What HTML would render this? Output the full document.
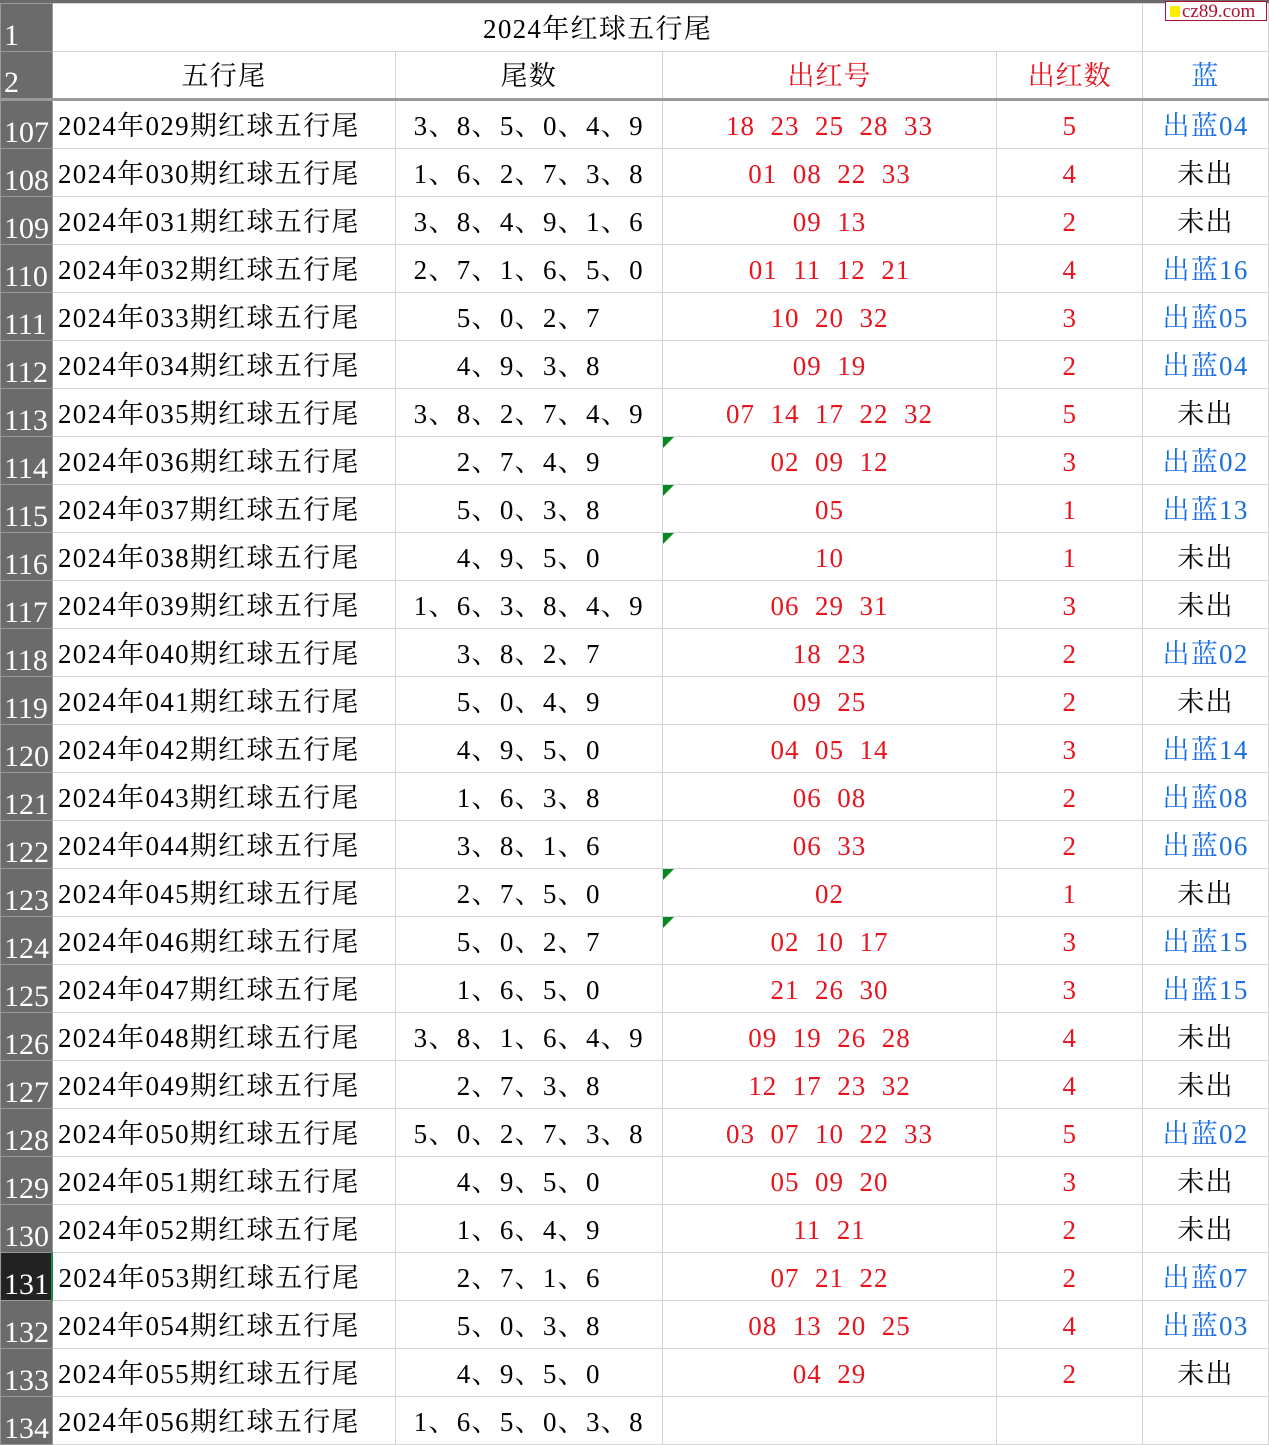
<!DOCTYPE html>
<html><head><meta charset="utf-8"><style>
body{margin:0;background:#fff;width:1269px;height:1441px;overflow:hidden;position:relative}
table{border-collapse:collapse;table-layout:fixed;position:absolute;left:0;top:3px;font-family:"Liberation Serif","Noto Serif CJK SC",serif;font-size:27px;letter-spacing:1.3px}
td{border:1px solid #d4d4d4;height:44px;line-height:44px;padding:3px 0 0 0;text-align:center;vertical-align:middle;white-space:pre;overflow:hidden;position:relative;color:#000}
td.h{background:#6b6b6b;color:#fff;border-color:#9a9a9a;font-size:30px;letter-spacing:0;vertical-align:bottom;text-align:left;padding:0 0 0 3px;height:47px;line-height:30px}
td.a{text-align:left;padding-left:5px}
.r{color:#e8141e}.b{color:#1a6fe0}
.r{letter-spacing:1px}
tr.hd td{border-bottom:3px solid #9a9a9a;height:43px;line-height:43px}
tr.hd td.h{height:46px;line-height:30px}
td.t::before{content:"";position:absolute;left:0;top:0;border-top:11px solid #0a8a1e;border-right:11px solid transparent}
.top{position:absolute;left:0;top:0;width:1269px;height:3px;background:#6b6b6b}
.logo{position:absolute;left:1165px;top:1px;width:102px;height:20px;border:1px solid #b01030;background:#fff;color:#b01030;font-family:"Liberation Serif",serif;font-size:19px;line-height:20px;box-sizing:border-box;padding-left:16px}
.logo::before{content:"";position:absolute;left:4px;top:4px;width:10px;height:11px;background:#ffee00}
</style></head><body>
<div class="top"></div>
<table>
<colgroup><col style="width:52px"><col style="width:343px"><col style="width:267px"><col style="width:335px"><col style="width:146px"><col style="width:126px"></colgroup>
<tr><td class="h">1</td><td colspan="4">2024年红球五行尾</td><td></td></tr>
<tr class="hd"><td class="h">2</td><td>五行尾</td><td>尾数</td><td class="r">出红号</td><td class="r">出红数</td><td class="b">蓝</td></tr>
<tr><td class="h">107</td><td class="a">2024年029期红球五行尾</td><td>3、8、5、0、4、9</td><td class="r">18  23  25  28  33</td><td class="r">5</td><td class="b">出蓝04</td></tr>
<tr><td class="h">108</td><td class="a">2024年030期红球五行尾</td><td>1、6、2、7、3、8</td><td class="r">01  08  22  33</td><td class="r">4</td><td>未出</td></tr>
<tr><td class="h">109</td><td class="a">2024年031期红球五行尾</td><td>3、8、4、9、1、6</td><td class="r">09  13</td><td class="r">2</td><td>未出</td></tr>
<tr><td class="h">110</td><td class="a">2024年032期红球五行尾</td><td>2、7、1、6、5、0</td><td class="r">01  11  12  21</td><td class="r">4</td><td class="b">出蓝16</td></tr>
<tr><td class="h">111</td><td class="a">2024年033期红球五行尾</td><td>5、0、2、7</td><td class="r">10  20  32</td><td class="r">3</td><td class="b">出蓝05</td></tr>
<tr><td class="h">112</td><td class="a">2024年034期红球五行尾</td><td>4、9、3、8</td><td class="r">09  19</td><td class="r">2</td><td class="b">出蓝04</td></tr>
<tr><td class="h">113</td><td class="a">2024年035期红球五行尾</td><td>3、8、2、7、4、9</td><td class="r">07  14  17  22  32</td><td class="r">5</td><td>未出</td></tr>
<tr><td class="h">114</td><td class="a">2024年036期红球五行尾</td><td>2、7、4、9</td><td class="r t">02  09  12</td><td class="r">3</td><td class="b">出蓝02</td></tr>
<tr><td class="h">115</td><td class="a">2024年037期红球五行尾</td><td>5、0、3、8</td><td class="r t">05</td><td class="r">1</td><td class="b">出蓝13</td></tr>
<tr><td class="h">116</td><td class="a">2024年038期红球五行尾</td><td>4、9、5、0</td><td class="r t">10</td><td class="r">1</td><td>未出</td></tr>
<tr><td class="h">117</td><td class="a">2024年039期红球五行尾</td><td>1、6、3、8、4、9</td><td class="r">06  29  31</td><td class="r">3</td><td>未出</td></tr>
<tr><td class="h">118</td><td class="a">2024年040期红球五行尾</td><td>3、8、2、7</td><td class="r">18  23</td><td class="r">2</td><td class="b">出蓝02</td></tr>
<tr><td class="h">119</td><td class="a">2024年041期红球五行尾</td><td>5、0、4、9</td><td class="r">09  25</td><td class="r">2</td><td>未出</td></tr>
<tr><td class="h">120</td><td class="a">2024年042期红球五行尾</td><td>4、9、5、0</td><td class="r">04  05  14</td><td class="r">3</td><td class="b">出蓝14</td></tr>
<tr><td class="h">121</td><td class="a">2024年043期红球五行尾</td><td>1、6、3、8</td><td class="r">06  08</td><td class="r">2</td><td class="b">出蓝08</td></tr>
<tr><td class="h">122</td><td class="a">2024年044期红球五行尾</td><td>3、8、1、6</td><td class="r">06  33</td><td class="r">2</td><td class="b">出蓝06</td></tr>
<tr><td class="h">123</td><td class="a">2024年045期红球五行尾</td><td>2、7、5、0</td><td class="r t">02</td><td class="r">1</td><td>未出</td></tr>
<tr><td class="h">124</td><td class="a">2024年046期红球五行尾</td><td>5、0、2、7</td><td class="r t">02  10  17</td><td class="r">3</td><td class="b">出蓝15</td></tr>
<tr><td class="h">125</td><td class="a">2024年047期红球五行尾</td><td>1、6、5、0</td><td class="r">21  26  30</td><td class="r">3</td><td class="b">出蓝15</td></tr>
<tr><td class="h">126</td><td class="a">2024年048期红球五行尾</td><td>3、8、1、6、4、9</td><td class="r">09  19  26  28</td><td class="r">4</td><td>未出</td></tr>
<tr><td class="h">127</td><td class="a">2024年049期红球五行尾</td><td>2、7、3、8</td><td class="r">12  17  23  32</td><td class="r">4</td><td>未出</td></tr>
<tr><td class="h">128</td><td class="a">2024年050期红球五行尾</td><td>5、0、2、7、3、8</td><td class="r">03  07  10  22  33</td><td class="r">5</td><td class="b">出蓝02</td></tr>
<tr><td class="h">129</td><td class="a">2024年051期红球五行尾</td><td>4、9、5、0</td><td class="r">05  09  20</td><td class="r">3</td><td>未出</td></tr>
<tr><td class="h">130</td><td class="a">2024年052期红球五行尾</td><td>1、6、4、9</td><td class="r">11  21</td><td class="r">2</td><td>未出</td></tr>
<tr><td class="h" style="background:#222;border-right:2px solid #1e8a4a">131</td><td class="a">2024年053期红球五行尾</td><td>2、7、1、6</td><td class="r">07  21  22</td><td class="r">2</td><td class="b">出蓝07</td></tr>
<tr><td class="h">132</td><td class="a">2024年054期红球五行尾</td><td>5、0、3、8</td><td class="r">08  13  20  25</td><td class="r">4</td><td class="b">出蓝03</td></tr>
<tr><td class="h">133</td><td class="a">2024年055期红球五行尾</td><td>4、9、5、0</td><td class="r">04  29</td><td class="r">2</td><td>未出</td></tr>
<tr><td class="h">134</td><td class="a">2024年056期红球五行尾</td><td>1、6、5、0、3、8</td><td></td><td></td><td></td></tr>
</table>
<div class="logo">cz89.com</div>
</body></html>
